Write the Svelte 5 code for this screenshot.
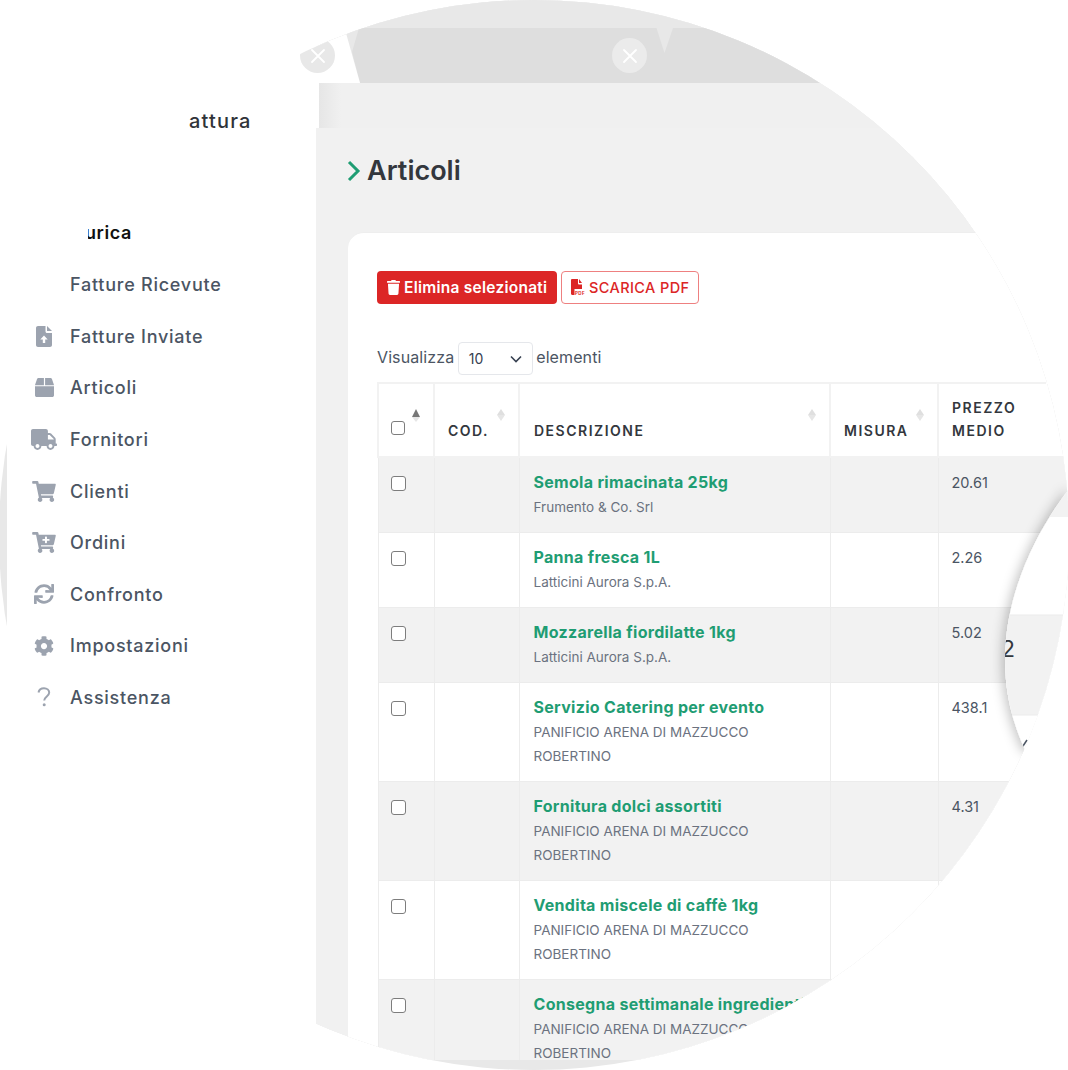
<script lang="ts">
	const icons = {
		box: { box: '0 0 512 512', d: 'M509.5 184.6L458.9 32.8C452.4 13.2 434.1 0 413.4 0H272v192h238.7c-.4-2.5-.4-5-1.2-7.4zM240 0H98.6c-20.7 0-39 13.2-45.5 32.8L2.5 184.6c-.8 2.4-.8 4.9-1.2 7.4H240V0zM0 224v240c0 26.5 21.5 48 48 48h416c26.5 0 48-21.5 48-48V224H0z', w: 19, h: 19 },
		truck: { box: '0 0 640 512', d: 'M624 352h-16V243.9c0-12.7-5.1-24.9-14.1-33.9L494 110.1c-9-9-21.2-14.1-33.9-14.1H416V48c0-26.5-21.5-48-48-48H48C21.5 0 0 21.5 0 48v320c0 26.5 21.5 48 48 48h16c0 53 43 96 96 96s96-43 96-96h128c0 53 43 96 96 96s96-43 96-96h48c8.8 0 16-7.2 16-16v-32c0-8.8-7.2-16-16-16zM160 464c-26.5 0-48-21.5-48-48s21.5-48 48-48 48 21.5 48 48-21.5 48-48 48zm320 0c-26.5 0-48-21.5-48-48s21.5-48 48-48 48 21.5 48 48-21.5 48-48 48zm80-208H416V144h44.1l99.9 99.9V256z', w: 26, h: 21 },
		cart: { box: '0 0 576 512', d: 'M528.12 301.319l47.273-208C578.806 78.301 567.391 64 551.99 64H159.208l-9.166-44.81C147.758 8.021 137.93 0 126.529 0H24C10.745 0 0 10.745 0 24v16c0 13.255 10.745 24 24 24h69.883l70.248 343.435C147.325 417.1 136 435.222 136 456c0 30.928 25.072 56 56 56s56-25.072 56-56c0-15.674-6.447-29.835-16.824-40h209.647C430.447 426.165 424 440.326 424 456c0 30.928 25.072 56 56 56s56-25.072 56-56c0-22.172-12.888-41.332-31.579-50.405l5.517-24.276c3.413-15.018-8.002-29.319-23.403-29.319H218.117l-6.545-32h293.145c11.206 0 20.92-7.754 23.403-18.681z', w: 24, h: 21 },
		cartPlus: { box: '0 0 576 512', d: 'M504.717 320H211.572l6.545 32h268.418c15.401 0 26.816 14.301 23.403 29.319l-5.517 24.276C523.112 414.668 536 433.828 536 456c0 31.202-25.519 56.444-56.824 55.994-29.823-.429-54.35-24.631-55.155-54.447-.44-16.287 6.085-31.049 16.803-41.548H231.176C241.553 426.165 248 440.326 248 456c0 31.813-26.528 57.431-58.67 55.938-28.54-1.325-51.751-24.385-53.251-52.917-1.158-22.034 10.436-41.455 28.051-51.586L93.883 64H24C10.745 64 0 53.255 0 40V24C0 10.745 10.745 0 24 0h102.529c11.401 0 21.228 8.021 23.513 19.19L159.208 64H551.99c15.401 0 26.816 14.301 23.403 29.319l-47.273 208C525.637 312.246 515.923 320 504.717 320zM408 168h-48v-40c0-8.837-7.163-16-16-16h-16c-8.837 0-16 7.163-16 16v40h-48c-8.837 0-16 7.163-16 16v16c0 8.837 7.163 16 16 16h48v40c0 8.837 7.163 16 16 16h16c8.837 0 16-7.163 16-16v-40h48c8.837 0 16-7.163 16-16v-16c0-8.837-7.163-16-16-16z', w: 24, h: 21 },
		sync: { box: '0 0 512 512', d: 'M440.65 12.57l4 82.77A247.16 247.16 0 0 0 255.83 8C134.73 8 33.91 94.92 12.29 209.82A12 12 0 0 0 24.09 224h49.05a12 12 0 0 0 11.67-9.26 175.91 175.91 0 0 1 317-56.94l-101.46-4.86a12 12 0 0 0-12.57 12v47.41a12 12 0 0 0 12 12H500a12 12 0 0 0 12-12V12a12 12 0 0 0-12-12h-47.37a12 12 0 0 0-11.98 12.57zM255.83 432a175.61 175.61 0 0 1-146-77.8l101.8 4.87a12 12 0 0 0 12.57-12v-47.4a12 12 0 0 0-12-12H12a12 12 0 0 0-12 12V500a12 12 0 0 0 12 12h47.35a12 12 0 0 0 12-12.6l-4.15-82.57A247.17 247.17 0 0 0 255.83 504c121.11 0 221.93-86.92 243.55-201.82a12 12 0 0 0-11.8-14.18h-49.05a12 12 0 0 0-11.67 9.26A175.86 175.86 0 0 1 255.83 432z', w: 20, h: 20 },
		cog: { box: '0 0 512 512', d: 'M487.4 315.7l-42.6-24.6c4.3-23.2 4.3-47 0-70.2l42.6-24.6c4.9-2.8 7.1-8.6 5.5-14-11.1-35.6-30-67.8-54.7-94.6-3.8-4.1-10-5.1-14.8-2.3L380.8 110c-17.9-15.4-38.5-27.3-60.8-35.1V25.8c0-5.6-3.9-10.5-9.4-11.7-36.7-8.2-74.3-7.8-109.2 0-5.5 1.2-9.4 6.1-9.4 11.7V75c-22.2 7.9-42.8 19.8-60.8 35.1L88.7 85.5c-4.9-2.8-11-1.9-14.8 2.3-24.7 26.7-43.6 58.9-54.7 94.6-1.7 5.4.6 11.2 5.5 14L67.3 221c-4.3 23.2-4.3 47 0 70.2l-42.6 24.6c-4.9 2.8-7.1 8.6-5.5 14 11.1 35.6 30 67.8 54.7 94.6 3.8 4.1 10 5.1 14.8 2.3l42.6-24.6c17.9 15.4 38.5 27.3 60.8 35.1v49.2c0 5.6 3.9 10.5 9.4 11.7 36.7 8.2 74.3 7.8 109.2 0 5.5-1.2 9.4-6.1 9.4-11.7v-49.2c22.2-7.9 42.8-19.8 60.8-35.1l42.6 24.6c4.9 2.8 11 1.9 14.8-2.3 24.7-26.7 43.6-58.9 54.7-94.6 1.5-5.5-.7-11.3-5.6-14.1zM256 336c-44.1 0-80-35.9-80-80s35.9-80 80-80 80 35.9 80 80-35.9 80-80 80z', w: 20, h: 20 }
	};

	const menu = [
		{ label: 'Fatture Ricevute' },
		{ label: 'Fatture Inviate', kind: 'upload' },
		{ label: 'Articoli', icon: icons.box },
		{ label: 'Fornitori', icon: icons.truck },
		{ label: 'Clienti', icon: icons.cart },
		{ label: 'Ordini', icon: icons.cartPlus },
		{ label: 'Confronto', icon: icons.sync },
		{ label: 'Impostazioni', icon: icons.cog },
		{ label: 'Assistenza', kind: 'help' }
	];

	const panificio = 'PANIFICIO ARENA DI MAZZUCCO ROBERTINO';
	const rows = [
		{ name: 'Semola rimacinata 25kg', vendor: 'Frumento & Co. Srl', price: '20.61' },
		{ name: 'Panna fresca 1L', vendor: 'Latticini Aurora S.p.A.', price: '2.26' },
		{ name: 'Mozzarella fiordilatte 1kg', vendor: 'Latticini Aurora S.p.A.', price: '5.02' },
		{ name: 'Servizio Catering per evento', vendor: panificio, price: '438.1' },
		{ name: 'Fornitura dolci assortiti', vendor: panificio, price: '4.31' },
		{ name: 'Vendita miscele di caffè 1kg', vendor: panificio, price: '' },
		{ name: 'Consegna settimanale ingredienti', vendor: panificio, price: '' }
	];
</script>

<div class="stage">
	<aside class="sidebar">
		<div class="logo">attura</div>
		<nav>
			<div class="item current"><span class="cut">urica</span></div>
			{#each menu as m}
				<div class="item">
					<span class="ico">
						{#if m.icon}
							<svg width={m.icon.w} height={m.icon.h} viewBox={m.icon.box}><path d={m.icon.d} fill="#9ca3af" /></svg>
						{:else if m.kind === 'upload'}
							<svg width="16" height="21" viewBox="0 0 16 21">
								<path d="M2 0H9.500V5.500C9.500 6.300 10.200 7 11 7H16V19C16 20.100 15.100 21 14 21H2C.9 21 0 20.100 0 19V2C0 .9.9 0 2 0Z" fill="#9ca3af" />
								<path d="M11 0L16 5H11Z" fill="#9ca3af" />
								<path d="M8 9.500l3.700 4H9.200V17H6.800V13.500H4.300Z" fill="#fff" />
							</svg>
						{:else if m.kind === 'help'}
							<svg width="14" height="20" viewBox="0 0 14 20">
								<path d="M1.500 5.500C2 3 4 1.200 7 1.200c3 0 5.200 1.900 5.200 4.400 0 3.800-5 3.900-5 7.900" fill="none" stroke="#9ca3af" stroke-width="2" />
								<circle cx="7.200" cy="17.800" r="1.500" fill="#9ca3af" />
							</svg>
						{/if}
					</span>
					<span>{m.label}</span>
				</div>
			{/each}
		</nav>
	</aside>

	<div class="window">
		<div class="chrome">
			<svg width="752" height="83" viewBox="316 0 752 83">
				<path d="M359 28H1068V83H360L352 52Z" fill="#dedede" />
				<path d="M656.500 28H673L664.500 53Z" fill="#e8e8e8" />
				<path d="M316 0H346V33L360 83H316Z" fill="#fff" />
			</svg>
		</div>
		<div class="backpanel"></div>
		<main>
			<h1>
				<svg width="14" height="22" viewBox="0 0 14 22"><path d="M2 2l9 9-9 9" fill="none" stroke="#1f9d73" stroke-width="3" /></svg>
				Articoli
			</h1>
			<section class="card">
				<div class="actions">
					<button type="button" class="danger">
						<svg width="13" height="15" viewBox="0 0 448 512"><path d="M432 32H312l-9.4-18.7A24 24 0 0 0 281.1 0H166.8a23.72 23.72 0 0 0-21.4 13.3L136 32H16A16 16 0 0 0 0 48v32a16 16 0 0 0 16 16h416a16 16 0 0 0 16-16V48a16 16 0 0 0-16-16zM53.2 467a48 48 0 0 0 47.9 45h245.8a48 48 0 0 0 47.9-45L416 128H32z" fill="#fff" /></svg>
						Elimina selezionati
					</button>
					<button type="button" class="outline">
						<svg width="14" height="17" viewBox="0 0 14 17">
							<path d="M0 1.200C0 .5.5 0 1.200 0H7v4.500c0 .5.4.9.9.9H11V16H1.200C.5 16 0 15.500 0 14.800Z" fill="#dc2626" />
							<path d="M8 0l3 4H8Z" fill="#dc2626" />
							<rect x="3.500" y="10" width="10.500" height="6.500" fill="#fff" />
							<text x="4" y="15.500" class="pdf">PDF</text>
						</svg>
						SCARICA PDF
					</button>
				</div>
				<div class="length">
					Visualizza
					<span class="select">10
						<svg width="12" height="8" viewBox="0 0 12 8"><path d="M1 1.500l5 5 5-5" fill="none" stroke="#374151" stroke-width="1.600" /></svg>
					</span>
					elementi
				</div>
				<table>
					<colgroup>
						<col style="width:56px" /><col style="width:85px" /><col style="width:311px" /><col style="width:108px" /><col style="width:108px" /><col />
					</colgroup>
					<thead>
						<tr>
							<th class="check-head"><span class="check small"></span><span class="sort active"></span></th>
							<th>COD.<span class="sort"></span></th>
							<th class="wide">DESCRIZIONE<span class="sort"></span></th>
							<th>MISURA<span class="sort"></span></th>
							<th class="last">PREZZO<br />MEDIO</th>
							<th class="filler"></th>
						</tr>
					</thead>
					<tbody>
						{#each rows as r}
							<tr>
								<td class="check-cell"><span class="check"></span></td>
								<td></td>
								<td class="desc"><div class="name">{r.name}</div><div class="vendor">{r.vendor}</div></td>
								<td></td>
								<td class="price">{r.price}</td>
								<td class="filler"></td>
							</tr>
						{/each}
					</tbody>
				</table>
			</section>
		</main>
	</div>

	<button type="button" class="close one" aria-label="Chiudi">
		<svg width="16" height="16" viewBox="0 0 16 16"><path d="M2 2l12 12M14 2L2 14" stroke="#fff" stroke-width="1.800" stroke-linecap="round" /></svg>
	</button>
	<button type="button" class="close two" aria-label="Chiudi">
		<svg width="16" height="16" viewBox="0 0 16 16"><path d="M2 2l12 12M14 2L2 14" stroke="#fff" stroke-width="1.800" stroke-linecap="round" /></svg>
	</button>

	<svg class="curl" width="100" height="300" viewBox="968 470 100 300">
		<defs>
			<clipPath id="curl-shape"><path d="M1070 488C1038 528 1005 592 1005 660C1005 692 1012 722 1026 752H1070Z" /></clipPath>
			<filter id="curl-shadow" x="-40%" y="-10%" width="160%" height="120%">
				<feDropShadow dx="-3" dy="0" stdDeviation="6" flood-color="#000" flood-opacity="0.24" />
			</filter>
		</defs>
		<path d="M1070 488C1038 528 1005 592 1005 660C1005 692 1012 722 1026 752H1070Z" fill="#fff" filter="url(#curl-shadow)" />
		<g clip-path="url(#curl-shape)">
			<rect x="1000" y="470" width="70" height="47" fill="#f2f2f2" />
			<rect x="1000" y="615" width="70" height="100" fill="#f2f2f2" stroke="#ececec" />
			<text x="1001" y="657" class="two-digit">2</text>
			<path d="M1021 749l6-9" stroke="#4b5563" stroke-width="1.500" fill="none" />
		</g>
	</svg>
</div>

<style>
	:global(body) {
		margin: 0;
		background: #fff;
	}
	.stage {
		position: relative;
		width: 1068px;
		height: 1070px;
		display: grid;
		grid-template-columns: 316px 1fr;
		align-items: start;
		overflow: hidden;
		font-family: Inter, 'Noto Sans', sans-serif;
		color: #4b5563;
	}
	/* the disc behind everything; the pieces on top repeat its clip in their own coordinates */
	.stage::before {
		content: '';
		position: absolute;
		inset: 0;
		background: #e8e8e8;
		clip-path: circle(535px at 534px 535px);
	}
	.sidebar {
		position: relative;
		margin-left: 7px;
		height: 1070px;
		background: #fff;
		padding-top: 107px;
		box-sizing: border-box;
	}
	.logo {
		height: 28px;
		line-height: 28px;
		margin-left: 182px;
		margin-bottom: 72.300px;
		font-size: 20px;
		font-weight: 500;
		color: #2f3338;
		letter-spacing: 1.200px;
	}
	.item {
		display: flex;
		align-items: center;
		height: 51.600px;
		font-size: 18px;
		letter-spacing: 0.750px;
		font-weight: 500;
		color: #4b5563;
	}
	.ico {
		flex: 0 0 63px;
		box-sizing: border-box;
		padding-left: 11px;
		height: 24px;
		display: flex;
		align-items: center;
		justify-content: center;
	}
	.current {
		font-weight: 600;
		color: #111;
		padding-left: 80.500px;
		letter-spacing: 0.600px;
	}
	.cut {
		display: flex;
		justify-content: flex-end;
		width: 44.500px;
		margin-bottom: 2px;
		overflow: hidden;
		white-space: nowrap;
	}
	.window {
		position: relative;
		height: 1060px;
		overflow: hidden;
		background: #f1f1f1;
		display: flex;
		flex-direction: column;
		clip-path: circle(535px at 218px 535px);
	}
	.chrome {
		flex: 0 0 83px;
		background: #e8e8e8;
	}
	.chrome svg {
		display: block;
	}
	.backpanel {
		flex: 0 0 45px;
		margin-left: 3px;
		background: linear-gradient(90deg, #e6e6e6, #f0f0f0 22px);
		box-shadow: -3px 0 0 #fff;
	}
	main {
		flex: 1;
		min-height: 0;
		background: #f1f1f1;
		padding: 23px 0 0 32px;
	}
	h1 {
		display: flex;
		align-items: center;
		gap: 6px;
		margin: 0 0 42px -1px;
		height: 39px;
		font-size: 27px;
		font-weight: 600;
		color: #33373d;
	}
	.card {
		background: #fff;
		border-top-left-radius: 16px;
		padding: 38px 0 0 29px;
		height: 830px;
		overflow: hidden;
		border-top: 1px solid #eeeeee;
	}
	.actions {
		display: flex;
		gap: 4px;
	}
	button {
		font-family: inherit;
	}
	.actions button {
		display: flex;
		align-items: center;
		height: 33px;
		border-radius: 4px;
		font-size: 14.500px;
		box-sizing: border-box;
		padding: 0;
		white-space: nowrap;
	}
	.actions .danger {
		width: 180px;
		gap: 4px;
		padding-left: 10px;
		background: #dc2626;
		border: 0;
		color: #fff;
		font-size: 15.500px;
		letter-spacing: 0.250px;
		font-weight: 600;
	}
	.actions .outline {
		width: 138px;
		gap: 4px;
		padding-left: 9px;
		background: #fff;
		border: 1px solid #ee8080;
		color: #dc2626;
		letter-spacing: 0.400px;
		font-weight: 500;
	}
	.pdf {
		font-size: 4.500px;
		font-weight: 700;
		fill: #dc2626;
	}
	.length {
		display: flex;
		align-items: center;
		gap: 3.500px;
		margin-top: 36px;
		height: 34px;
		font-size: 16px;
		letter-spacing: 0.100px;
		color: #4b5563;
	}
	.select {
		display: flex;
		align-items: center;
		justify-content: space-between;
		align-self: flex-start;
		margin-top: 2px;
		width: 75px;
		height: 33px;
		box-sizing: border-box;
		padding: 0 10px;
		border: 1px solid #e5e7eb;
		border-radius: 4px;
		color: #374151;
		font-size: 14px;
	}
	table {
		margin-top: 8px;
		width: 800px;
		table-layout: fixed;
		border-collapse: collapse;
		font-size: 14.500px;
	}
	th {
		position: relative;
		height: 74px;
		box-sizing: border-box;
		padding: 0 13px 14px;
		vertical-align: bottom;
		text-align: left;
		font-size: 14px;
		line-height: 23px;
		font-weight: 600;
		letter-spacing: 1.500px;
		color: #33373d;
		border: 2px solid #f2f2f2;
	}
	th.wide {
		padding-left: 14px;
	}
	th.last {
		border-right: 0;
	}
	th.filler {
		border-top: 0;
		border-left: 0;
		border-right: 0;
	}
	td {
		border: 1px solid #ececec;
		vertical-align: top;
		padding: 13px 13px 0;
		box-sizing: border-box;
	}
	td.desc {
		padding-left: 14px;
	}
	td.price {
		padding-top: 14px;
		border-right: 0;
	}
	td.filler {
		border-left: 0;
		border-right: 0;
	}
	tbody tr:nth-child(odd) {
		background: #f2f2f2;
	}
	tbody tr {
		height: 75px;
	}
	.check {
		display: block;
		width: 15px;
		height: 15px;
		box-sizing: border-box;
		border: 1.500px solid #7d7d7d;
		border-radius: 3px;
		background: #fff;
	}
	.check.small {
		width: 14px;
		height: 14px;
	}
	.check-head {
		padding-bottom: 21px;
		padding-left: 12px;
	}
	td.check-cell {
		padding-top: 18px;
		padding-left: 12px;
	}
	.sort {
		position: absolute;
		top: 25px;
		right: 13px;
		width: 0;
		height: 0;
		border-left: 4.500px solid transparent;
		border-right: 4.500px solid transparent;
		border-bottom: 6px solid #dfdfdf;
	}
	.sort::after {
		content: '';
		position: absolute;
		left: -4.500px;
		top: 6px;
		border-left: 4.500px solid transparent;
		border-right: 4.500px solid transparent;
		border-top: 6px solid #e6e6e6;
	}
	.sort.active {
		top: 25px;
		right: 13px;
		border-bottom: 8px solid #777;
	}
	.sort.active::after {
		top: 8px;
		border-top: 5px solid #e6e6e6;
	}
	.name {
		font-size: 16px;
		letter-spacing: 0.300px;
		line-height: 22px;
		font-weight: 700;
		color: #1f9d73;
		white-space: nowrap;
	}
	.vendor {
		margin-top: 1.500px;
		font-size: 13.500px;
		line-height: 24px;
		color: #6b7280;
		padding-bottom: 13.500px;
	}
	.price {
		font-size: 14.500px;
		line-height: 22px;
		color: #4b5563;
	}
	.close {
		position: absolute;
		width: 35px;
		height: 35px;
		padding: 0;
		border: 0;
		border-radius: 50%;
		background: #e8e8e8;
		display: flex;
		align-items: center;
		justify-content: center;
	}
	.close.one {
		left: 300px;
		top: 38px;
		clip-path: circle(535px at 234px 497px);
	}
	.close.two {
		left: 612px;
		top: 38px;
		background: #ebebeb;
	}
	.curl {
		position: absolute;
		left: 968px;
		top: 470px;
		clip-path: circle(535px at -434px 65px);
	}
	.two-digit {
		font-size: 23px;
		fill: #33373d;
	}
</style>
